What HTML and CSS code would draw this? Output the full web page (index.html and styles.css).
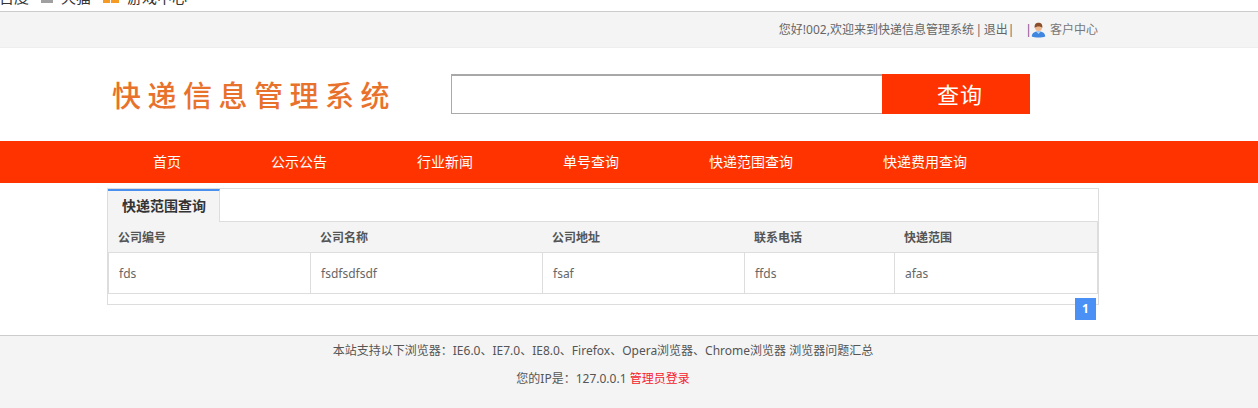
FILE: index.html
```html
<!DOCTYPE html>
<html lang="zh-CN">
<head>
<meta charset="utf-8">
<title>快递信息管理系统</title>
<link rel="stylesheet" href="styles.css">
</head>
<body>
<div class="bookmarks">
  <div class="bookmarks-inner">
    <span class="mark">百度</span>
    <span class="mark"><i class="mark-icon gray"></i>天猫</span>
    <span class="mark"><i class="mark-icon orange"></i>游戏中心</span>
  </div>
</div>
<div class="topbar">
  <div class="wrap topbar-inner">
    <span class="welcome">您好!002,欢迎来到快递信息管理系统 | 退出|</span>
    <span class="sep">|</span>
    <svg class="user-icon" width="15" height="16" viewBox="0 0 15 16" aria-hidden="true">
      <path d="M.8 14.500C1 11 3 9.500 7.500 9.500s6.500 1.500 6.700 5c-3 1.300-10.400 1.300-13.400 0z" fill="#3f86e0"/>
      <path d="M5 9.500l2.500 2.500L10 9.500z" fill="#a9d0f5"/>
      <circle cx="7.500" cy="5.500" r="3.500" fill="#edb890"/>
      <path d="M3.700 6C3.200 2 5.300.8 7.500.8s4.300 1.200 3.800 5.200C10.500 4 5 4 3.700 6z" fill="#8a4f2a"/>
    </svg>
    <span class="service">客户中心</span>
  </div>
</div>
<header class="header">
  <div class="logo">快递信息管理系统</div>
  <form class="search">
    <input class="search-input" type="text">
    <button class="search-btn" type="button">查询</button>
  </form>
</header>
<nav class="nav">
  <a>首页</a>
  <a>公示公告</a>
  <a>行业新闻</a>
  <a>单号查询</a>
  <a>快递范围查询</a>
  <a>快递费用查询</a>
</nav>
<main class="panel-area">
  <section class="panel">
    <div class="tabs"><div class="tab">快递范围查询</div></div>
    <table class="grid">
      <colgroup>
        <col class="c1"><col class="c2"><col class="c3"><col class="c4"><col class="c5">
      </colgroup>
      <thead>
        <tr><th>公司编号</th><th>公司名称</th><th>公司地址</th><th>联系电话</th><th>快递范围</th></tr>
      </thead>
      <tbody>
        <tr><td>fds</td><td>fsdfsdfsdf</td><td>fsaf</td><td>ffds</td><td>afas</td></tr>
      </tbody>
    </table>
  </section>
  <div class="pager"><span class="page">1</span></div>
</main>
<footer class="footer">
  <div class="wrap">
    <p>本站支持以下浏览器：IE6.0、IE7.0、IE8.0、Firefox、Opera浏览器、Chrome浏览器 浏览器问题汇总</p>
    <p>您的IP是：127.0.0.1 <a class="admin">管理员登录</a></p>
  </div>
</footer>
</body>
</html>
```
FILE: styles.css
```css
* { box-sizing: border-box; }
html, body { margin: 0; padding: 0; }
body {
  width: 1258px;
  height: 408px;
  overflow: hidden;
  background: #fff;
  color: #555;
  font: 12px/1.5 "Noto Sans", "Noto Sans CJK SC", sans-serif;
}
.wrap { width: 991px; margin-left: 107px; }
.bookmarks {
  height: 12px;
  border-bottom: 1px solid #ccc;
  overflow: hidden;
}
.bookmarks-inner {
  display: flex;
  gap: 12px;
  height: 16px;
  margin-top: -11px;
  margin-left: -1px;
  color: #333;
  font-size: 15px;
  line-height: 16px;
}
.mark { display: flex; align-items: center; gap: 8px; white-space: nowrap; }
.mark-icon { width: 12px; height: 12px; display: block; }
.gray { background: #a0a0a0; }
.orange {
  width: 16px;
  background: linear-gradient(90deg, #f59a23 46%, #fff 46%, #fff 52%, #f59a23 52%);
}
.topbar {
  height: 36px;
  background: #f4f4f4;
  border-bottom: 1px solid #eee;
}
.topbar-inner {
  display: flex;
  justify-content: flex-end;
  align-items: center;
  height: 35px;
  color: #666;
}
.welcome { word-spacing: -1.5px; }
.sep { margin-left: 11px; color: #7a4a8a; }
.user-icon { margin-left: -1px; margin-right: 4px; }
.service { color: #777; }
.header {
  height: 93px;
  display: flex;
  align-items: flex-start;
  padding-left: 112px;
}
.logo {
  width: 339px;
  margin-top: 25px;
  color: #e8722c;
  font-family: "Noto Sans CJK SC", sans-serif;
  font-size: 29px;
  font-weight: 500;
  line-height: 42px;
  letter-spacing: 6.5px;
  white-space: nowrap;
}
.search { display: flex; margin-top: 26px; height: 40px; }
.search-input {
  width: 431px;
  height: 40px;
  margin: 0;
  padding: 0 8px;
  border: 1px solid #aaa;
  border-top: 2px solid #a8a8a8;
  border-right: 0;
  outline: 0;
  background: #fff;
}
.search-btn {
  width: 148px;
  height: 40px;
  padding: 0 0 2px 8px;
  border: 0;
  background: #ff3300;
  color: #fff;
  font: 22px/38px "Noto Sans CJK SC", sans-serif;
  letter-spacing: 1px;
}
.nav {
  height: 42px;
  background: #ff3300;
  display: flex;
  padding-left: 108px;
  color: #fff;
  font-size: 14px;
  line-height: 41px;
}
.nav a { padding: 0 45px; white-space: nowrap; }
.panel-area {
  width: 992px;
  margin-left: 107px;
  padding-top: 5px;
  position: relative;
  height: 152px;
}
.panel {
  height: 117px;
  border: 1px solid #ddd;
}
.tabs { height: 33px; border-bottom: 1px solid #ddd; display: flex; }
.tab {
  width: 112px;
  height: 33px;
  padding-left: 1px;
  background: #f4f4f4;
  border-top: 2px solid #4a90ee;
  border-right: 1px solid #ddd;
  color: #333;
  font-size: 14px;
  font-weight: 700;
  line-height: 30px;
  text-align: center;
}
.grid {
  width: 990px;
  table-layout: fixed;
  border-collapse: separate;
  border-spacing: 0;
}
.c1 { width: 203px; }
.c2 { width: 232px; }
.c3 { width: 202px; }
.c4 { width: 150px; }
.c5 { width: 203px; }
.grid th {
  height: 31px;
  padding: 2px 9px 0;
  background: #f4f4f4;
  border-bottom: 1px solid #ddd;
  color: #555;
  font-size: 12px;
  font-weight: 700;
  text-align: left;
}
.grid th:first-child { padding-left: 10px; }
.grid th:last-child { border-right: 1px solid #ddd; }
.grid td {
  height: 41px;
  padding: 2px 10px 0;
  border-bottom: 1px solid #ddd;
  border-right: 1px solid #ddd;
  color: #666;
  font-size: 12px;
}
.grid td:first-child { border-left: 1px solid #ddd; }
.pager {
  position: absolute;
  right: 3px;
  top: 115px;
}
.page {
  display: block;
  width: 21px;
  height: 22px;
  background: #4a90f5;
  color: #fff;
  font-size: 12px;
  font-weight: 700;
  line-height: 22px;
  text-align: center;
}
.footer {
  height: 73px;
  background: #f4f4f4;
  border-top: 1px solid #ccc;
  text-align: center;
  color: #555;
  font-size: 12px;
  padding-top: 6px;
}
.footer .wrap { width: 992px; }
.footer p { margin: 0 0 10px; line-height: 18px; }
.admin { color: #f5222d; }
```
